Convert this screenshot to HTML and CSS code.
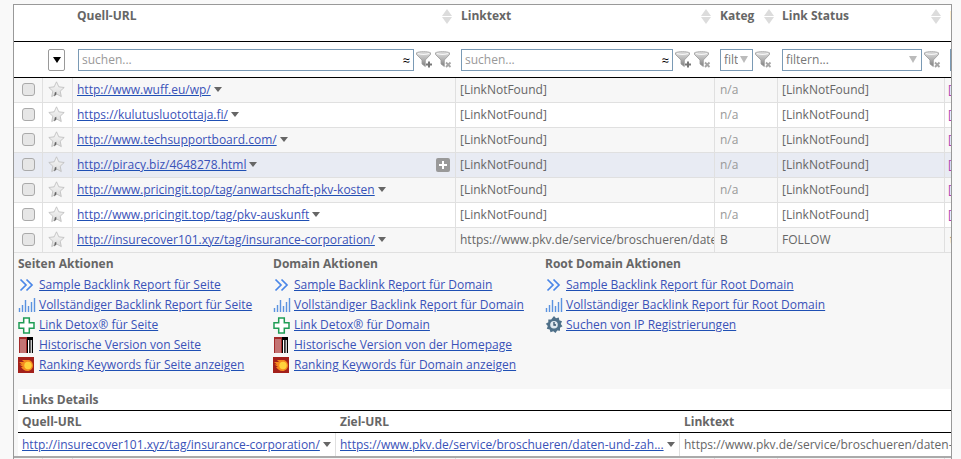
FILE: index.html
```html
<!DOCTYPE html>
<html lang="en">
<head>
    <meta charset="UTF-8">
    <meta name="viewport" content="width=device-width, initial-scale=1.0">
    <title>Backlinks</title>
    <link rel="stylesheet" href="styles.css">
</head>
<body>
    <svg class="defs" width="0" height="0">
        <defs>
            <linearGradient id="funnelFill" x1="0" y1="0" x2="0" y2="1">
                <stop offset="0" stop-color="#e2e2e2"/>
                <stop offset=".5" stop-color="#b4b4b4"/>
                <stop offset="1" stop-color="#7d7d7d"/>
            </linearGradient>
            <linearGradient id="starFill" x1="0" y1="0" x2="0" y2="1">
                <stop offset="0" stop-color="#f8f8f8"/>
                <stop offset="1" stop-color="#dcdcdc"/>
            </linearGradient>
            <symbol id="funnel-plus" viewBox="0 0 17 17">
                <path d="M.5 1.800C3 .3 12 .3 14.500 1.800V3.500L9.300 9V15.500L6 13V9L.5 3.500Z" fill="url(#funnelFill)" stroke="#999" stroke-width=".8"/>
                <path d="M2 2.500C5 3.600 10 3.600 13 2.500" fill="none" stroke="#f6f6f6" stroke-width="1.200"/>
                <path d="M13 10.500V16.500M10 13.500H16" stroke="#777" stroke-width="2"/>
            </symbol>
            <symbol id="funnel-x" viewBox="0 0 17 17">
                <path d="M.5 1.800C3 .3 12 .3 14.500 1.800V3.500L9.300 9V15.500L6 13V9L.5 3.500Z" fill="url(#funnelFill)" stroke="#999" stroke-width=".8"/>
                <path d="M2 2.500C5 3.600 10 3.600 13 2.500" fill="none" stroke="#f6f6f6" stroke-width="1.200"/>
                <path d="M11 11.500L15.500 16M15.500 11.500L11 16" stroke="#a5a5a5" stroke-width="1.800"/>
            </symbol>
            <symbol id="star" viewBox="0 0 17 17">
                <path d="M8.500 .8L10.800 5.800 16.200 6.500 12.200 10.200 13.300 15.600 8.500 12.900 3.700 15.600 4.800 10.200 .8 6.500 6.200 5.800Z" fill="url(#starFill)" stroke="#bbb" stroke-width=".8"/>
                <path d="M6.200 15L6.800 11.500 8.300 10.800V13.200L6.800 15.300Z" fill="#666"/>
            </symbol>
            <symbol id="chevrons" viewBox="0 0 16 16">
                <path d="M2.500 2.500L8 8 2.500 13.500M8.500 2.500L14 8 8.500 13.500" fill="none" stroke="#4a86e8" stroke-width="1.700"/>
            </symbol>
            <symbol id="bars" viewBox="0 0 18 16">
                <path d="M1.500 11V15M4.500 8V15M7.500 3V15M10.500 9V15M13.500 5V15M16.500 1V15" fill="none" stroke="#5b93e0" stroke-width="1.400"/>
            </symbol>
            <symbol id="cross" viewBox="0 0 17 17">
                <path d="M5.700 1H11.300V5.700H16V11.300H11.300V16H5.700V11.300H1V5.700H5.700Z" fill="#fff" stroke="#1f9d55" stroke-width="1.500"/>
            </symbol>
            <symbol id="archive" viewBox="0 0 16 16">
                <rect x="1" width="14" height="16" fill="#fff"/>
                <rect x="1" width="8" height="16" fill="#a32a2a"/>
                <path d="M3 2V16M5 2V16M7 2V16" stroke="#fff" stroke-width=".7"/>
                <path d="M9 0H15V16H13.800V3H12.600V16H11.200V3H10V16H9Z" fill="#000"/>
            </symbol>
            <symbol id="fire" viewBox="0 0 16 16">
                <rect width="16" height="16" fill="#a3201b"/>
                <path d="M1 5L6 5 4 3 10 3C13 3 15 5.500 15 8.500C15 11.500 12.500 14 9.500 14 6.500 14 4.500 12 3 10L5 10 1.500 7.500 4 7.500Z" fill="#f58a1f"/>
                <circle cx="10" cy="8.500" r="3.700" fill="#ffd23c"/>
            </symbol>
            <symbol id="gear" viewBox="0 0 18 18">
                <path d="M9 0L11 2.300 13.800 1.500 14.300 4.300 17 5.300 15.800 8 17.500 10.300 15 11.800 15 14.700 12.200 14.500 10.500 17 8.300 15.200 5.500 16.200 4.700 13.400 1.800 12.700 2.800 10 .8 7.800 3.300 6.300 3.300 3.400 6.200 3.500Z" fill="#4f7089"/>
                <circle cx="9" cy="8.700" r="3.800" fill="#dfe8ef"/>
                <path d="M9 6V9H11" fill="none" stroke="#34516b" stroke-width="1.300"/>
            </symbol>
        </defs>
    </svg>

    <div class="frame">
        <table class="grid">
            <colgroup>
                <col class="c-check"><col class="c-star"><col class="c-source"><col class="c-text"><col class="c-cat"><col class="c-status"><col class="c-last">
            </colgroup>
            <thead>
                <tr class="head">
                    <th></th>
                    <th></th>
                    <th><div class="head-in">Quell-URL <span class="sort"></span></div></th>
                    <th><div class="head-in">Linktext <span class="sort"></span></div></th>
                    <th><div class="head-in">Kateg <span class="sort"></span></div></th>
                    <th><div class="head-in">Link Status <span class="sort"></span></div></th>
                    <th><div class="head-in">Datum</div></th>
                </tr>
                <tr class="filters">
                    <th></th>
                    <th><button class="pick"><span class="pick-arrow"></span></button></th>
                    <th>
                        <div class="filter-in">
                            <div class="box"><span class="hint">suchen...</span><span class="approx">≈</span></div>
                            <svg class="fn" width="17" height="17"><use href="#funnel-plus"/></svg>
                            <svg class="fn" width="17" height="17"><use href="#funnel-x"/></svg>
                        </div>
                    </th>
                    <th>
                        <div class="filter-in">
                            <div class="box"><span class="hint">suchen...</span><span class="approx">≈</span></div>
                            <svg class="fn" width="17" height="17"><use href="#funnel-plus"/></svg>
                            <svg class="fn" width="17" height="17"><use href="#funnel-x"/></svg>
                        </div>
                    </th>
                    <th>
                        <div class="filter-in">
                            <div class="box"><span class="val">filtern...</span><span class="drop"></span></div>
                            <svg class="fn" width="17" height="17"><use href="#funnel-x"/></svg>
                        </div>
                    </th>
                    <th>
                        <div class="filter-in">
                            <div class="box"><span class="val">filtern...</span><span class="drop"></span></div>
                            <svg class="fn" width="17" height="17"><use href="#funnel-x"/></svg>
                        </div>
                    </th>
                    <th><div class="filter-in"><div class="box"></div></div></th>
                </tr>
            </thead>
            <tbody>
                <tr class="odd">
                    <td><input type="checkbox" class="chk"></td>
                    <td><svg class="star" width="17" height="17"><use href="#star"/></svg></td>
                    <td><a href="#">http://www.wuff.eu/wp/</a><span class="caret"></span></td>
                    <td>[LinkNotFound]</td>
                    <td class="na">n/a</td>
                    <td>[LinkNotFound]</td>
                    <td class="pink">[</td>
                </tr>
                <tr>
                    <td><input type="checkbox" class="chk"></td>
                    <td><svg class="star" width="17" height="17"><use href="#star"/></svg></td>
                    <td><a href="#">https://kulutusluotottaja.fi/</a><span class="caret"></span></td>
                    <td>[LinkNotFound]</td>
                    <td class="na">n/a</td>
                    <td>[LinkNotFound]</td>
                    <td class="pink">[</td>
                </tr>
                <tr class="odd">
                    <td><input type="checkbox" class="chk"></td>
                    <td><svg class="star" width="17" height="17"><use href="#star"/></svg></td>
                    <td><a href="#">http://www.techsupportboard.com/</a><span class="caret"></span></td>
                    <td>[LinkNotFound]</td>
                    <td class="na">n/a</td>
                    <td>[LinkNotFound]</td>
                    <td class="pink">[</td>
                </tr>
                <tr class="hover">
                    <td><input type="checkbox" class="chk"></td>
                    <td><svg class="star" width="17" height="17"><use href="#star"/></svg></td>
                    <td>
                        <div class="cell-row">
                            <span><a href="#">http://piracy.biz/4648278.html</a><span class="caret"></span></span>
                            <span class="expand"></span>
                        </div>
                    </td>
                    <td>[LinkNotFound]</td>
                    <td class="na">n/a</td>
                    <td>[LinkNotFound]</td>
                    <td class="pink">[</td>
                </tr>
                <tr class="odd">
                    <td><input type="checkbox" class="chk"></td>
                    <td><svg class="star" width="17" height="17"><use href="#star"/></svg></td>
                    <td><a href="#">http://www.pricingit.top/tag/anwartschaft-pkv-kosten</a><span class="caret"></span></td>
                    <td>[LinkNotFound]</td>
                    <td class="na">n/a</td>
                    <td>[LinkNotFound]</td>
                    <td class="pink">[</td>
                </tr>
                <tr>
                    <td><input type="checkbox" class="chk"></td>
                    <td><svg class="star" width="17" height="17"><use href="#star"/></svg></td>
                    <td><a href="#">http://www.pricingit.top/tag/pkv-auskunft</a><span class="caret"></span></td>
                    <td>[LinkNotFound]</td>
                    <td class="na">n/a</td>
                    <td>[LinkNotFound]</td>
                    <td class="pink">[</td>
                </tr>
                <tr class="odd">
                    <td><input type="checkbox" class="chk"></td>
                    <td><svg class="star" width="17" height="17"><use href="#star"/></svg></td>
                    <td><a href="#">http://insurecover101.xyz/tag/insurance-corporation/</a><span class="caret"></span></td>
                    <td>https://www.pkv.de/service/broschueren/daten-und-zahlen/</td>
                    <td>B</td>
                    <td>FOLLOW</td>
                    <td>t</td>
                </tr>
                <tr class="detail">
                    <td colspan="7">
                        <div class="actions">
                            <div class="action-col seite">
                                <h4>Seiten Aktionen</h4>
                                <div class="act"><svg width="16" height="16"><use href="#chevrons"/></svg><a href="#">Sample Backlink Report für Seite</a></div>
                                <div class="act"><svg class="wide" width="18" height="16"><use href="#bars"/></svg><a href="#">Vollständiger Backlink Report für Seite</a></div>
                                <div class="act"><svg width="17" height="17"><use href="#cross"/></svg><a href="#">Link Detox® für Seite</a></div>
                                <div class="act"><svg width="16" height="16"><use href="#archive"/></svg><a href="#">Historische Version von Seite</a></div>
                                <div class="act"><svg width="16" height="16"><use href="#fire"/></svg><a href="#">Ranking Keywords für Seite anzeigen</a></div>
                            </div>
                            <div class="action-col domain">
                                <h4>Domain Aktionen</h4>
                                <div class="act"><svg width="16" height="16"><use href="#chevrons"/></svg><a href="#">Sample Backlink Report für Domain</a></div>
                                <div class="act"><svg class="wide" width="18" height="16"><use href="#bars"/></svg><a href="#">Vollständiger Backlink Report für Domain</a></div>
                                <div class="act"><svg width="17" height="17"><use href="#cross"/></svg><a href="#">Link Detox® für Domain</a></div>
                                <div class="act"><svg width="16" height="16"><use href="#archive"/></svg><a href="#">Historische Version von der Homepage</a></div>
                                <div class="act"><svg width="16" height="16"><use href="#fire"/></svg><a href="#">Ranking Keywords für Domain anzeigen</a></div>
                            </div>
                            <div class="action-col">
                                <h4>Root Domain Aktionen</h4>
                                <div class="act"><svg width="16" height="16"><use href="#chevrons"/></svg><a href="#">Sample Backlink Report für Root Domain</a></div>
                                <div class="act"><svg class="wide" width="18" height="16"><use href="#bars"/></svg><a href="#">Vollständiger Backlink Report für Root Domain</a></div>
                                <div class="act"><svg class="wide" width="18" height="18"><use href="#gear"/></svg><a href="#">Suchen von IP Registrierungen</a></div>
                            </div>
                        </div>
                        <div class="details">
                            <div class="details-title">Links Details</div>
                            <table class="details-table">
                                <colgroup>
                                    <col class="d-source"><col class="d-target"><col class="d-text">
                                </colgroup>
                                <tr>
                                    <th>Quell-URL</th>
                                    <th>Ziel-URL</th>
                                    <th>Linktext</th>
                                </tr>
                                <tr>
                                    <td><a href="#">http://insurecover101.xyz/tag/insurance-corporation/</a><span class="caret"></span></td>
                                    <td><a href="#">https://www.pkv.de/service/broschueren/daten-und-zah...</a><span class="caret"></span></td>
                                    <td>https://www.pkv.de/service/broschueren/daten-und-zahlen/</td>
                                </tr>
                            </table>
                        </div>
                    </td>
                </tr>
                <tr class="odd">
                    <td></td><td></td><td></td><td></td><td></td><td></td><td></td>
                </tr>
            </tbody>
        </table>
    </div>
</body>
</html>
```

FILE: styles.css
```css
html, body {
    height: 100%;
    overflow: hidden;
}
body {
    margin: 0;
    padding: 4px 0 0 13px;
    box-sizing: border-box;
    background: #f9f9f9;
    color: #666;
    font-family: "Open Sans", sans-serif;
    font-size: 12px;
}
.defs {
    display: block;
    height: 0;
}
a {
    color: #3a52b8;
    text-decoration-color: #1f50b4;
}

/* main grid */
.frame {
    width: 937px;
    border: 1px solid #999;
    border-bottom: 0;
    overflow: hidden;
    height: 470px;
}
.grid {
    width: 1129px;
    table-layout: fixed;
    border-collapse: separate;
    border-spacing: 0;
}
.c-check { width: 28px; }
.c-star { width: 30px; }
.c-source { width: 383px; }
.c-text { width: 259px; }
.c-cat { width: 63px; }
.c-status { width: 167px; }
.c-last { width: 199px; }

.head th {
    height: 37px;
    box-sizing: border-box;
    background: #fff;
    border-bottom: 1px solid #000;
    padding: 0 0 0 6px;
    vertical-align: top;
    text-align: left;
    color: #666;
    font-size: 12px;
    line-height: 21px;
}
.head th:nth-child(3), .head th:nth-child(6) {
    padding-left: 5px;
}
.head-in {
    display: flex;
    justify-content: space-between;
    padding-right: 3px;
    white-space: nowrap;
}
.sort {
    position: relative;
    width: 10px;
    height: 15px;
    margin-top: 4px;
}
.sort::before, .sort::after {
    content: "";
    position: absolute;
    left: 0;
    border-left: 5px solid transparent;
    border-right: 5px solid transparent;
}
.sort::before {
    top: 0;
    border-bottom: 7px solid #dcdcdc;
}
.sort::after {
    bottom: 0;
    border-top: 7px solid #dcdcdc;
}

.filters th {
    height: 36px;
    box-sizing: border-box;
    background: #fff;
    border-bottom: 1px solid #000;
    padding: 3px 3px 0 6px;
    vertical-align: top;
    text-align: left;
    font-weight: normal;
}
.filters th:nth-child(2) {
    padding-left: 5px;
}
.filters th:nth-child(5) {
    padding-right: 5px;
}
.filters th:nth-child(6) {
    padding-left: 5px;
}
.pick {
    display: flex;
    align-items: center;
    justify-content: center;
    width: 17px;
    height: 22px;
    margin: 4px 0 0 1px;
    padding: 0;
    background: #fff;
    border: 1px solid #999;
    border-radius: 2px;
}
.pick-arrow {
    border-left: 4px solid transparent;
    border-right: 4px solid transparent;
    border-top: 6px solid #000;
}
.filter-in {
    display: flex;
    align-items: flex-start;
    gap: 1px;
    margin-top: 4px;
}
.box {
    flex: 1;
    min-width: 0;
    height: 22px;
    box-sizing: border-box;
    display: flex;
    align-items: center;
    justify-content: space-between;
    padding: 0 4px 1px 3px;
    background: #fff;
    border: 1px solid #7a9ab5;
    overflow: hidden;
    white-space: nowrap;
}
.hint {
    color: #999;
}
.val {
    color: #777;
    overflow: hidden;
}
.approx {
    color: #000;
    font-size: 13px;
    line-height: 14px;
    margin-right: -1px;
}
.drop {
    flex: none;
    margin-left: 2px;
    border-left: 4px solid transparent;
    border-right: 4px solid transparent;
    border-top: 7px solid #bbb;
}
.fn {
    display: block;
    flex: none;
    margin: 2px 0 0 1px;
}

/* rows */
tbody td {
    height: 25px;
    box-sizing: border-box;
    padding: 0 5px;
    border-left: 1px solid #e0e0e0;
    border-bottom: 1px solid #e0e0e0;
    background: #fff;
    color: #666;
    white-space: nowrap;
    overflow: hidden;
    line-height: 22px;
}
tbody td:first-child {
    border-left: 0;
}
tbody td:nth-child(3), tbody td:nth-child(4), tbody td:nth-child(6) {
    padding-left: 4px;
}
tbody tr.odd td {
    background: #f7f7f7;
}
tbody tr.hover td {
    background: #e8ebf3;
}
tbody td.na {
    color: #999;
}
tbody td.pink {
    color: #b040b0;
    padding-left: 3px;
}
.chk {
    display: block;
    appearance: none;
    width: 13px;
    height: 13px;
    margin: 0 0 2px 3px;
    background: #e6e6e6;
    border: 1px solid #aaa;
    border-radius: 3px;
}
.star {
    display: block;
    margin: 0 0 1px;
}
.caret {
    display: inline-block;
    margin-left: 3px;
    vertical-align: 2px;
    border-left: 4px solid transparent;
    border-right: 4px solid transparent;
    border-top: 5px solid #666;
}
.cell-row {
    display: flex;
    align-items: center;
    justify-content: space-between;
}
.expand {
    position: relative;
    width: 14px;
    height: 14px;
    background: #999;
    border-radius: 2px;
}
.expand::before, .expand::after {
    content: "";
    position: absolute;
    background: #fff;
}
.expand::before {
    left: 3px;
    right: 3px;
    top: 6px;
    height: 2px;
}
.expand::after {
    top: 3px;
    bottom: 3px;
    left: 6px;
    width: 2px;
}

/* expanded row */
tbody tr.detail > td {
    height: 204px;
    padding: 0 0 0 4px;
    background: #f7f7f7;
    border-left: 0;
    border-bottom: 2px solid #aaa;
    vertical-align: top;
    line-height: 20px;
}
.actions {
    display: flex;
    height: 135px;
    padding-top: 1px;
}
.action-col {
    width: 272px;
}
.action-col.seite {
    width: 255px;
}
.action-col h4 {
    margin: 0 0 1px;
    font-size: 12px;
    line-height: 20px;
    color: #666;
}
.act {
    display: flex;
    align-items: center;
    height: 20px;
}
.act svg {
    flex: none;
    margin-right: 5px;
}
.act svg[width="17"] {
    margin-right: 4px;
}
.act svg.wide {
    margin-right: 3px;
}
.details {
    background: #fff;
}
.details-title {
    height: 21px;
    padding-left: 4px;
    font-weight: bold;
    line-height: 21px;
    border-bottom: 1px solid #000;
}
.details-table {
    width: 1107px;
    table-layout: fixed;
    border-collapse: separate;
    border-spacing: 0;
}
.d-source { width: 317px; }
.d-target { width: 344px; }
.d-text { width: 446px; }
.details-table th {
    height: 22px;
    box-sizing: border-box;
    padding: 0 5px;
    text-align: left;
    color: #666;
    line-height: 21px;
    border-bottom: 1px solid #000;
}
.details-table th:first-child {
    padding-left: 4px;
}
.details-table td {
    height: 23px;
    padding: 0 4px;
    border-left: 1px solid #e0e0e0;
    border-bottom: 0;
    line-height: 20px;
}
.details-table td:first-child {
    border-left: 0;
}
```
